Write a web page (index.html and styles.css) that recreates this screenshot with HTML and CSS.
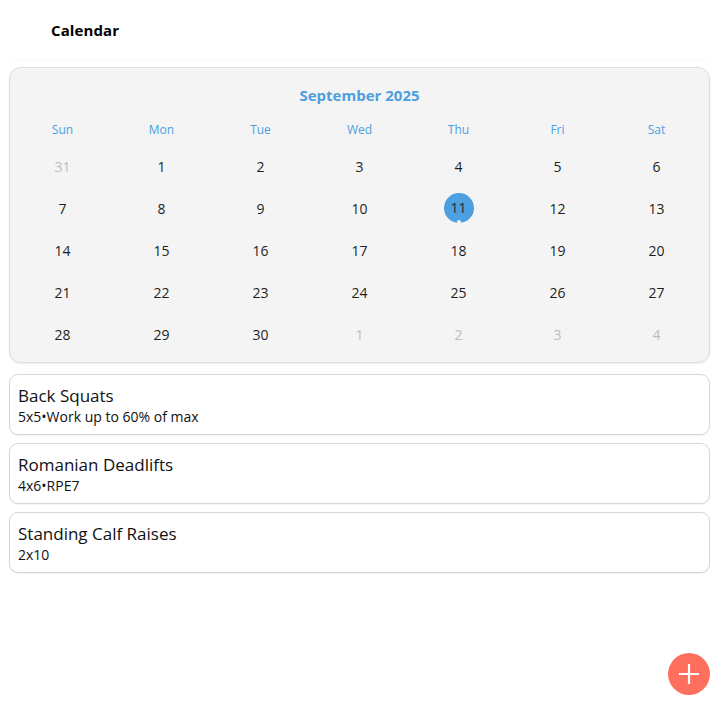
FILE: index.html
```html
<!DOCTYPE html>
<html>
<head>
<meta charset="utf-8">
<link rel="stylesheet" href="styles.css">
</head>
<body>
<div class="page">
  <header class="topbar"><h1 class="title">Calendar</h1></header>
  <section class="calendar">
    <div class="month">September 2025</div>
    <div class="grid">
      <div class="wd">Sun</div><div class="wd">Mon</div><div class="wd">Tue</div><div class="wd">Wed</div><div class="wd">Thu</div><div class="wd">Fri</div><div class="wd">Sat</div>
      <div class="day muted">31</div><div class="day">1</div><div class="day">2</div><div class="day">3</div><div class="day">4</div><div class="day">5</div><div class="day">6</div>
      <div class="day">7</div><div class="day">8</div><div class="day">9</div><div class="day">10</div><div class="day"><span class="today">11<i class="dot"></i></span></div><div class="day">12</div><div class="day">13</div>
      <div class="day">14</div><div class="day">15</div><div class="day">16</div><div class="day">17</div><div class="day">18</div><div class="day">19</div><div class="day">20</div>
      <div class="day">21</div><div class="day">22</div><div class="day">23</div><div class="day">24</div><div class="day">25</div><div class="day">26</div><div class="day">27</div>
      <div class="day">28</div><div class="day">29</div><div class="day">30</div><div class="day muted">1</div><div class="day muted">2</div><div class="day muted">3</div><div class="day muted">4</div>
    </div>
  </section>
  <div class="list">
    <div class="item"><div class="name">Back Squats</div><div class="sub">5x5•Work up to 60% of max</div></div>
    <div class="item"><div class="name">Romanian Deadlifts</div><div class="sub">4x6•RPE7</div></div>
    <div class="item"><div class="name">Standing Calf Raises</div><div class="sub">2x10</div></div>
  </div>
</div>
<button class="fab" aria-label="Add">
  <svg width="22" height="22" viewBox="0 0 22 22"><path d="M11 1v20M1 11h20" stroke="#fff" stroke-width="2.2" fill="none"/></svg>
</button>
</body>
</html>
```
FILE: styles.css
```css
* { box-sizing: border-box; }
html, body { margin: 0; padding: 0; background: #fff; }
body { font-family: "Open Sans", "Noto Sans", sans-serif; color: #1a1a1a; width: 716px; height: 704px; overflow: hidden; position: relative; }
.page { padding: 0 6px 0 9px; }
.topbar { height: 60px; display: flex; align-items: center; padding-left: 42px; border-bottom: 1px solid #fafafa; }
.title { margin: 0; font-size: 15px; font-weight: 700; color: #000; letter-spacing: 0.1px; padding-top: 0; }
.calendar { margin-top: 7px; height: 296px; background: #f4f4f4; border: 1px solid #dedede; border-radius: 12px; box-shadow: 0 1px 2px rgba(0,0,0,0.08); padding: 16px 3px 0 3px; }
.month { text-align: center; color: #4c9fe0; font-weight: 700; font-size: 15px; height: 22px; line-height: 22px; }
.grid { display: grid; grid-template-columns: repeat(7, 1fr); grid-template-rows: 24px; grid-auto-rows: 42px; margin-top: 15px; }
.wd { color: #4c9fe0; font-size: 12px; text-align: center; height: 17px; line-height: 17px; }
.grid .wd { grid-row: 1; align-self: start; }
.day { display: flex; align-items: center; justify-content: center; font-size: 14px; color: #1f1f1f; }
.day.muted { color: #bdbdbd; }
.today { position: relative; width: 30px; height: 30px; border-radius: 50%; background: #4c9fe0; display: flex; align-items: center; justify-content: center; color: #1f2a36; margin-top: -1px; }
.dot { position: absolute; bottom: -1px; left: 13px; width: 4px; height: 4px; border-radius: 50%; background: #f4f4f4; }
.list { display: flex; flex-direction: column; gap: 8px; margin-top: 11px; }
.item { height: 61px; border: 1.5px solid #d6d6d6; border-radius: 9px; background: #fff; padding: 10px 8px 0 8px; box-shadow: 0 1px 1px rgba(0,0,0,0.05); }
.name { font-size: 17px; line-height: 22px; color: #111; }
.sub { font-size: 14px; line-height: 20px; color: #111; margin-top: 0; }
.fab { position: absolute; left: 668px; top: 653px; width: 42px; height: 42px; border-radius: 50%; background: #ff6f5e; border: none; padding: 0; display: flex; align-items: center; justify-content: center; }
```
